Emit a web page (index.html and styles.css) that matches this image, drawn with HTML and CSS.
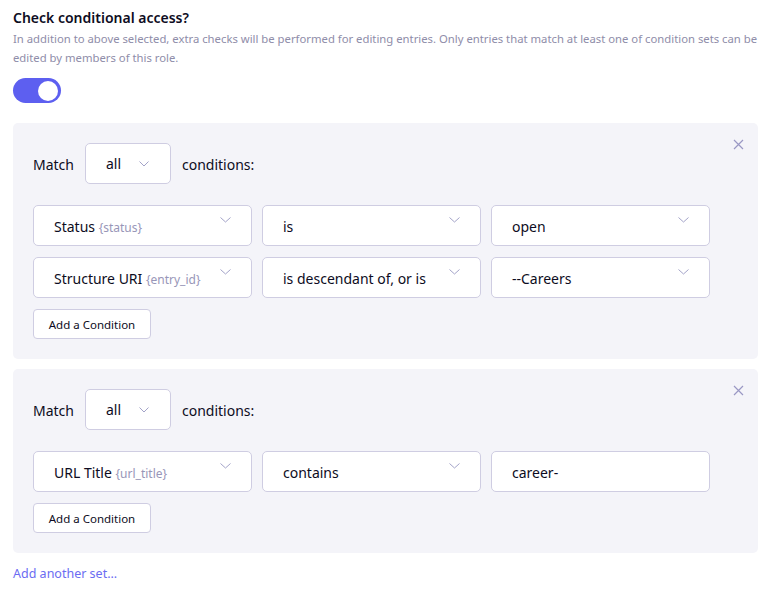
FILE: index.html
```html
<!DOCTYPE html>
<html>
<head>
<meta charset="utf-8">
<link rel="stylesheet" href="styles.css">
</head>
<body>
<div class="page">
  <div class="field-head">
    <h3 class="title">Check conditional access?</h3>
    <p class="desc">In addition to above selected, extra checks will be performed for editing entries. Only entries that match at least one of condition sets can be edited by members of this role.</p>
  </div>
  <div class="toggle"><span class="knob"></span></div>

  <div class="sets">
    <div class="set">
      <button class="remove" aria-label="Remove"><svg width="11" height="11" viewBox="0 0 11 11"><path d="M1 1L10 10M10 1L1 10" stroke="#9a98c4" stroke-width="1.2" fill="none"/></svg></button>
      <div class="match-row">
        <span>Match</span>
        <div class="match-select"><span>all</span><svg class="chev-c" width="10" height="6" viewBox="0 0 10 6"><path d="M0.5 0.5L5 5L9.5 0.5" stroke="#a3a3c8" stroke-width="1" fill="none"/></svg></div>
        <span>conditions:</span>
      </div>
      <div class="rows">
        <div class="row">
          <div class="sel"><span>Status <em>{status}</em></span><svg class="chev" width="11" height="6" viewBox="0 0 11 6"><path d="M0.5 0.5L5.5 5L10.5 0.5" stroke="#a3a3c8" stroke-width="1" fill="none"/></svg></div>
          <div class="sel"><span>is</span><svg class="chev" width="11" height="6" viewBox="0 0 11 6"><path d="M0.5 0.5L5.5 5L10.5 0.5" stroke="#a3a3c8" stroke-width="1" fill="none"/></svg></div>
          <div class="sel"><span>open</span><svg class="chev" width="11" height="6" viewBox="0 0 11 6"><path d="M0.5 0.5L5.5 5L10.5 0.5" stroke="#a3a3c8" stroke-width="1" fill="none"/></svg></div>
        </div>
        <div class="row">
          <div class="sel"><span>Structure URI <em>{entry_id}</em></span><svg class="chev" width="11" height="6" viewBox="0 0 11 6"><path d="M0.5 0.5L5.5 5L10.5 0.5" stroke="#a3a3c8" stroke-width="1" fill="none"/></svg></div>
          <div class="sel"><span>is descendant of, or is</span><svg class="chev" width="11" height="6" viewBox="0 0 11 6"><path d="M0.5 0.5L5.5 5L10.5 0.5" stroke="#a3a3c8" stroke-width="1" fill="none"/></svg></div>
          <div class="sel"><span>--Careers</span><svg class="chev" width="11" height="6" viewBox="0 0 11 6"><path d="M0.5 0.5L5.5 5L10.5 0.5" stroke="#a3a3c8" stroke-width="1" fill="none"/></svg></div>
        </div>
      </div>
      <button class="add-btn">Add a Condition</button>
    </div>

    <div class="set">
      <button class="remove" aria-label="Remove"><svg width="11" height="11" viewBox="0 0 11 11"><path d="M1 1L10 10M10 1L1 10" stroke="#9a98c4" stroke-width="1.2" fill="none"/></svg></button>
      <div class="match-row">
        <span>Match</span>
        <div class="match-select"><span>all</span><svg class="chev-c" width="10" height="6" viewBox="0 0 10 6"><path d="M0.5 0.5L5 5L9.5 0.5" stroke="#a3a3c8" stroke-width="1" fill="none"/></svg></div>
        <span>conditions:</span>
      </div>
      <div class="rows">
        <div class="row">
          <div class="sel"><span>URL Title <em>{url_title}</em></span><svg class="chev" width="11" height="6" viewBox="0 0 11 6"><path d="M0.5 0.5L5.5 5L10.5 0.5" stroke="#a3a3c8" stroke-width="1" fill="none"/></svg></div>
          <div class="sel"><span>contains</span><svg class="chev" width="11" height="6" viewBox="0 0 11 6"><path d="M0.5 0.5L5.5 5L10.5 0.5" stroke="#a3a3c8" stroke-width="1" fill="none"/></svg></div>
          <div class="sel input"><span>career-</span></div>
        </div>
      </div>
      <button class="add-btn">Add a Condition</button>
    </div>
  </div>

  <a class="add-set" href="#">Add another set...</a>
</div>
</body>
</html>
```

FILE: styles.css
```css
* { box-sizing: border-box; }
body {
  margin: 0;
  background: #fff;
  font-family: "Noto Sans", "Open Sans", sans-serif;
  color: #0d0c22;
}
.page {
  padding: 8px 19px 0 13px;
}
.title {
  margin: 0;
  font-size: 14px;
  font-weight: 600;
  line-height: 20px;
  color: #0d0c22;
}
.desc {
  margin: 1px 0 0;
  font-size: 11.3px;
  line-height: 19px;
  color: #8f8da9;
}
.toggle {
  margin-top: 11px;
  width: 48px;
  height: 25px;
  border-radius: 13px;
  background: #5d5ff0;
  position: relative;
}
.knob {
  position: absolute;
  top: 2.5px;
  right: 3px;
  width: 20px;
  height: 20px;
  border-radius: 50%;
  background: #fff;
}
.sets {
  margin-top: 20px;
  display: flex;
  flex-direction: column;
  gap: 10px;
}
.set {
  position: relative;
  background: #f4f4f9;
  border-radius: 5px;
  padding: 20px 48px 20px 20px;
}
.remove {
  position: absolute;
  top: 16px;
  right: 14px;
  border: 0;
  background: none;
  padding: 0;
  width: 11px;
  height: 11px;
  display: flex;
}
.match-row {
  display: flex;
  align-items: center;
  gap: 11px;
  font-size: 14px;
  color: #0d0c22;
}
.match-row > span { padding-top: 1px; }
.match-select {
  width: 86px;
  height: 41px;
  background: #fff;
  border: 1px solid #cfcde2;
  border-radius: 5px;
  display: flex;
  align-items: center;
  padding: 0 21px 0 20px;
  justify-content: space-between;
}
.chev-c { margin-top: 1px; }
.rows {
  margin-top: 21px;
  display: flex;
  flex-direction: column;
  gap: 11px;
}
.row {
  display: flex;
  gap: 10px;
}
.sel {
  position: relative;
  width: 219px;
  height: 41px;
  background: #fff;
  border: 1px solid #cfcde2;
  border-radius: 5px;
  display: flex;
  align-items: center;
  padding: 2px 20px 0 20px;
  font-size: 14px;
  white-space: nowrap;
}
.sel em {
  font-style: normal;
  font-size: 12px;
  color: #9896b8;
}
.chev {
  position: absolute;
  top: 11px;
  right: 20px;
}
.add-btn {
  margin-top: 11px;
  display: block;
  width: 118px;
  height: 30px;
  background: #fff;
  border: 1px solid #cfcde2;
  border-radius: 4px;
  font-family: inherit;
  font-size: 11.5px;
  color: #0d0c22;
  padding: 0;
}
.add-set {
  display: inline-block;
  margin-top: 12px;
  font-size: 12.5px;
  color: #6b6cf2;
  text-decoration: none;
}
```
